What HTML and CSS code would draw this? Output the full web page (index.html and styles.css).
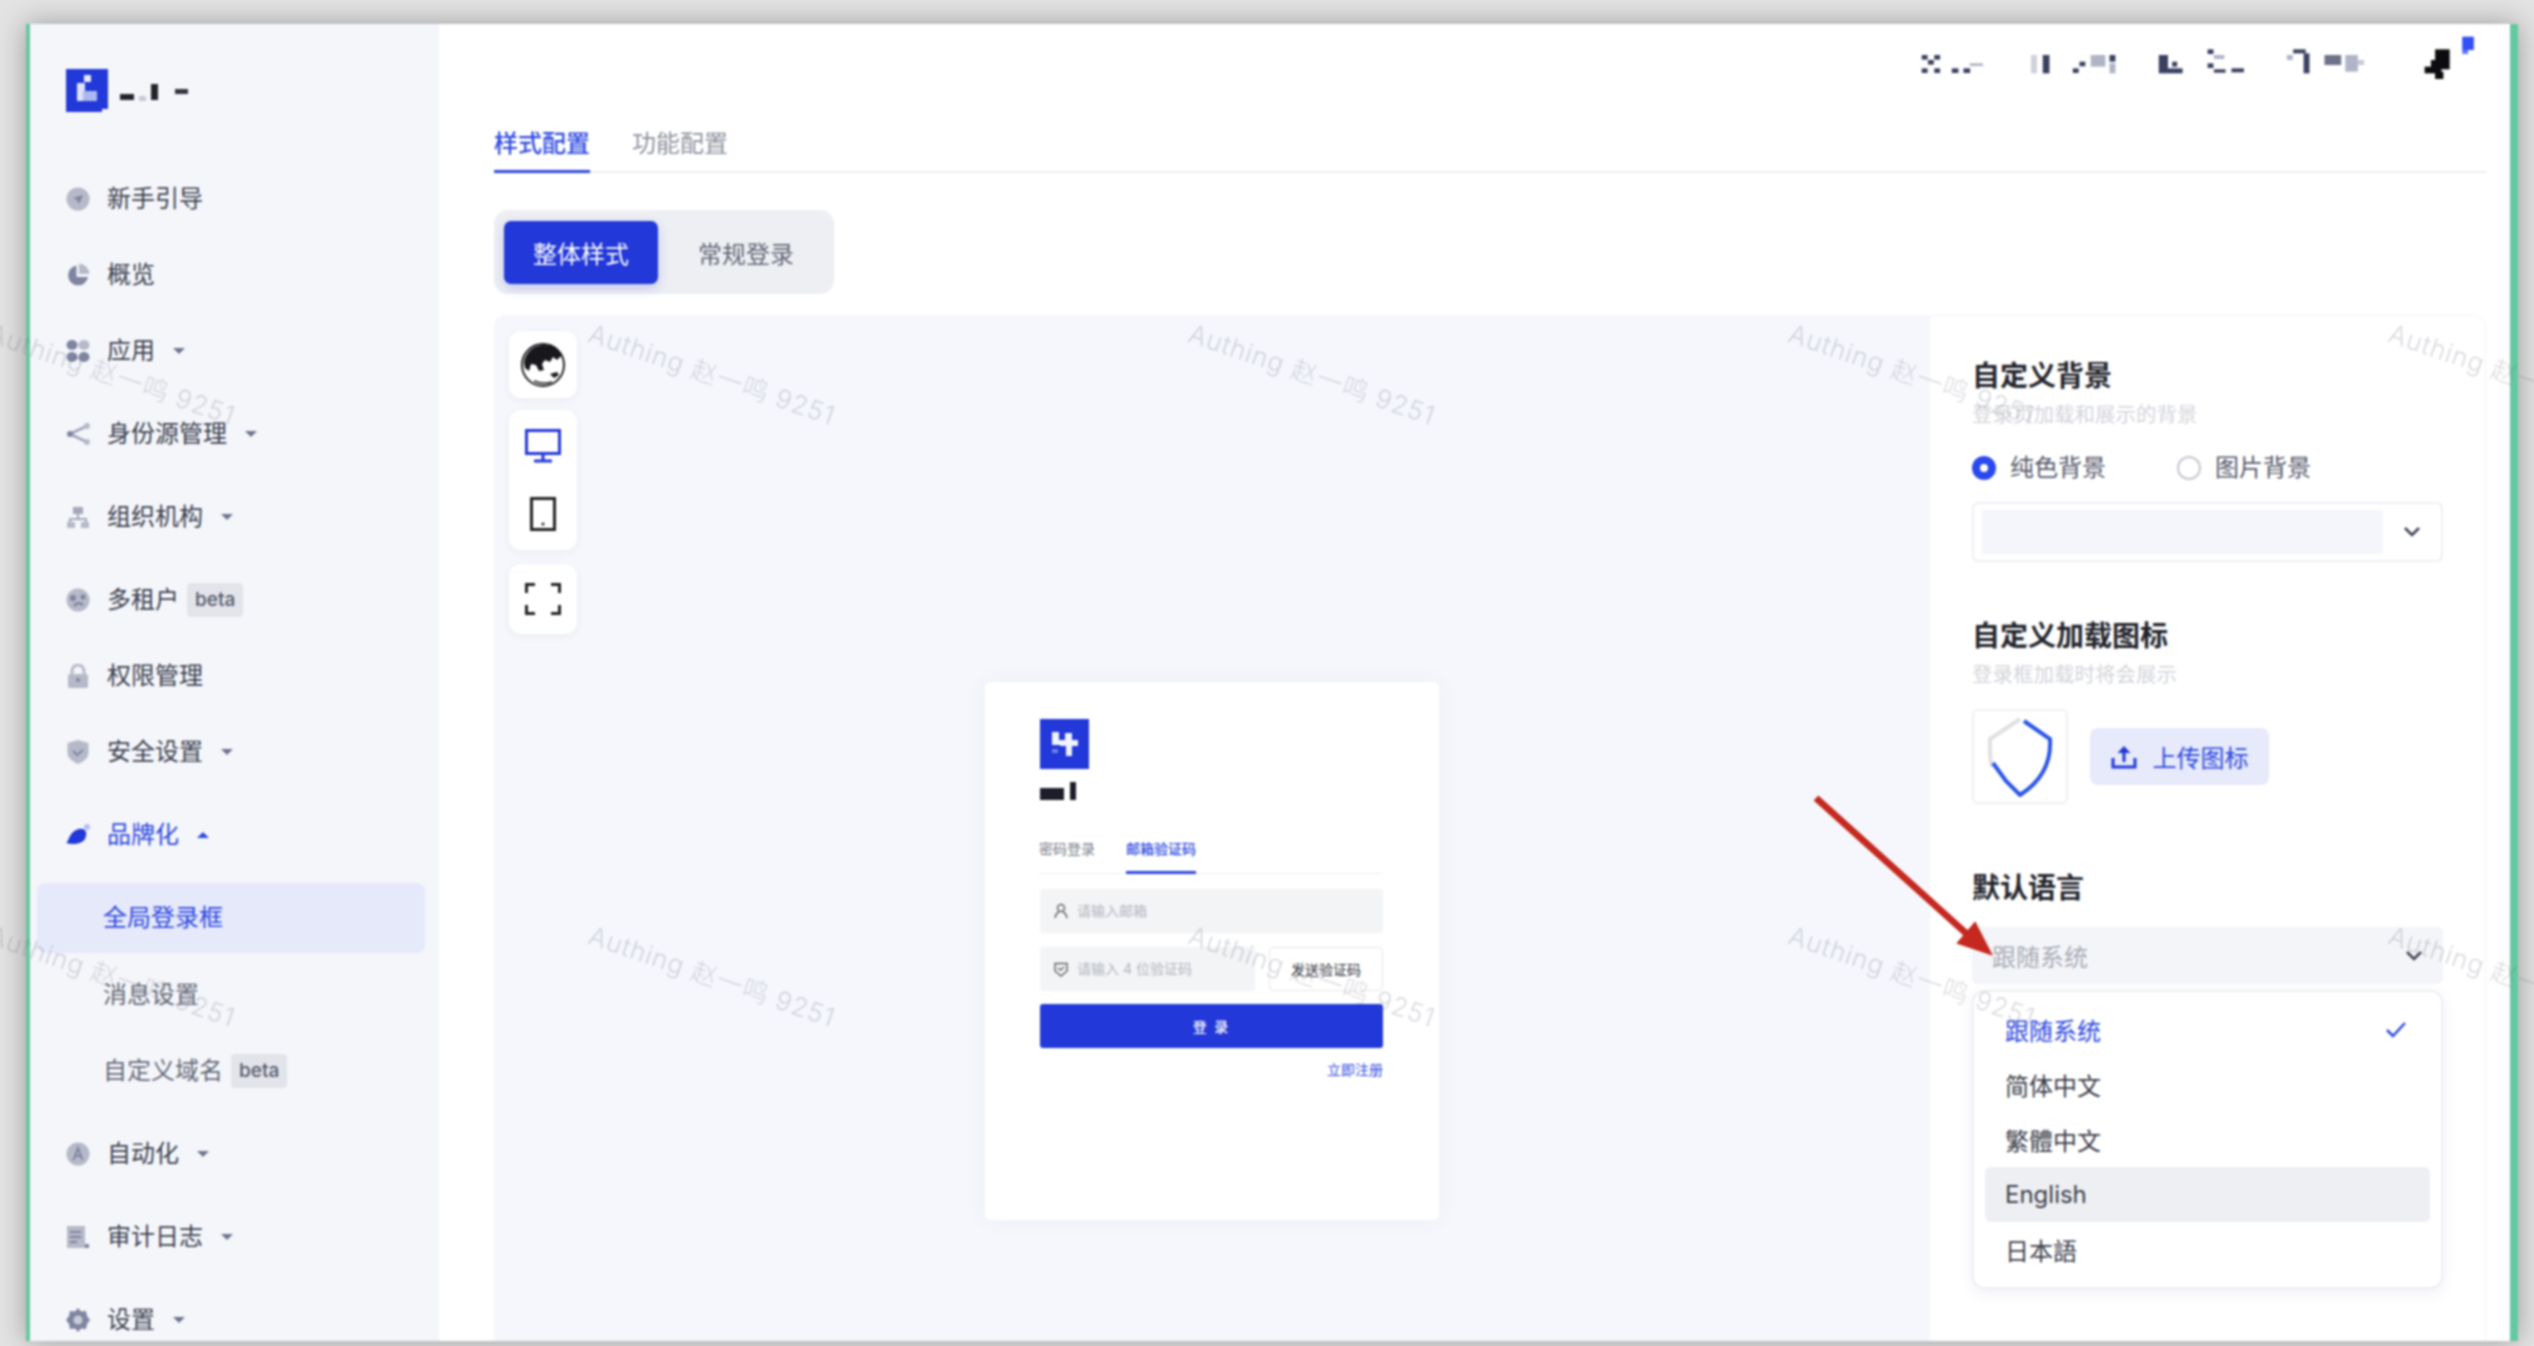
FILE: index.html
```html
<!DOCTYPE html>
<html lang="zh-CN">

<head>
    <meta charset="UTF-8">
    <title>全局登录框</title>
    <link rel="stylesheet" href="styles.css">
</head>

<body>
    <div class="Fenster">
        <aside class="Sidebar">
            <div class="Logo">
                <svg width="42" height="43" viewBox="0 0 42 43">
                    <rect width="42" height="40" fill="#2238d8" />
                    <rect y="38" width="36" height="5" fill="#2238d8" />
                    <rect x="18" y="6" width="7" height="7" fill="#e8ebfb" />
                    <rect x="11" y="14" width="8" height="18" fill="#dfe3fa" />
                    <rect x="17" y="22" width="14" height="10" fill="#aeb8f0" />
                </svg>
                <svg class="LogoText" width="72" height="20" viewBox="0 0 72 20">
                    <rect x="0" y="11" width="14" height="6" fill="#22232c" />
                    <rect x="19" y="13" width="7" height="5" fill="#c9cad0" />
                    <rect x="31" y="1" width="7" height="16" fill="#22232c" />
                    <rect x="55" y="6" width="13" height="5" fill="#33343c" />
                </svg>
            </div>
            <nav class="Menu">
                <a class="MenuItem">
                    <svg class="MenuIcon" viewBox="0 0 24 24"><circle cx="12" cy="12" r="11.5" fill="#b6b9c8" /><path d="M7 11l10-3-4 9-2-4z" fill="#7f84a0" /></svg>
                    <span>新手引导</span>
                </a>
                <a class="MenuItem">
                    <svg class="MenuIcon" viewBox="0 0 24 24"><path d="M10.500 2.500a10 10 0 1 0 11.500 11.500h-11.500z" fill="#7f84a0" /><path d="M13 0.500a11 11 0 0 1 10.500 10.500h-10.500z" fill="#b6b9c8" /></svg>
                    <span>概览</span>
                </a>
                <a class="MenuItem">
                    <svg class="MenuIcon" viewBox="0 0 24 24"><ellipse cx="6" cy="6" rx="5.500" ry="5" fill="#7f84a0" /><ellipse cx="18" cy="6" rx="5.500" ry="5" fill="#b6b9c8" /><ellipse cx="6" cy="18" rx="5.500" ry="5" fill="#7f84a0" /><ellipse cx="18" cy="18" rx="5.500" ry="5" fill="#7f84a0" /></svg>
                    <span>应用</span><i class="Caret"></i>
                </a>
                <a class="MenuItem Abstand">
                    <svg class="MenuIcon" viewBox="0 0 24 24"><path d="M21 4L4 12l17 8" fill="none" stroke="#a3a7ba" stroke-width="3" /><circle cx="21" cy="4" r="3" fill="#b6b9c8" /><circle cx="21" cy="20" r="3" fill="#b6b9c8" /><circle cx="4" cy="12" r="3" fill="#7f84a0" /></svg>
                    <span>身份源管理</span><i class="Caret"></i>
                </a>
                <a class="MenuItem Abstand">
                    <svg class="MenuIcon" viewBox="0 0 24 24"><rect x="7" y="2" width="10" height="7" fill="#a3a7ba" /><path d="M12 9v5M4 17v-3h16v3" fill="none" stroke="#a3a7ba" stroke-width="2" /><rect x="1" y="17" width="8" height="6" fill="#b6b9c8" /><rect x="15" y="17" width="8" height="6" fill="#b6b9c8" /></svg>
                    <span>组织机构</span><i class="Caret"></i>
                </a>
                <a class="MenuItem Abstand">
                    <svg class="MenuIcon" viewBox="0 0 24 24"><circle cx="12" cy="12" r="11.500" fill="#b6b9c8" /><circle cx="7" cy="10" r="3" fill="#7f84a0" /><circle cx="17" cy="9" r="2.500" fill="#7f84a0" /><path d="M8 18q4-5 9-1" fill="none" stroke="#7f84a0" stroke-width="2.500" /></svg>
                    <span>多租户</span><em class="Beta">beta</em>
                </a>
                <a class="MenuItem">
                    <svg class="MenuIcon" viewBox="0 0 24 24"><path d="M6 10V7a6 6 0 0 1 12 0v3" fill="none" stroke="#b6b9c8" stroke-width="3" /><rect x="2" y="10" width="20" height="14" rx="2" fill="#b6b9c8" /><circle cx="12" cy="16" r="2" fill="#7f84a0" /></svg>
                    <span>权限管理</span>
                </a>
                <a class="MenuItem">
                    <svg class="MenuIcon" viewBox="0 0 24 24"><path d="M12 0l10.500 3v10c0 5-5 8.500-10.500 11C6.500 21.500 1.500 18 1.500 13V3z" fill="#b6b9c8" /><path d="M7 11l4 4 6-5" fill="none" stroke="#7f84a0" stroke-width="2" /></svg>
                    <span>安全设置</span><i class="Caret"></i>
                </a>
                <a class="MenuItem Abstand Blau">
                    <svg class="MenuIcon" viewBox="0 0 24 24"><path d="M0 20c3-1 3-12 13-14 7-1 9 4 6 10-3 5-12 6-19 4z" fill="#2238d8" /><circle cx="21" cy="4" r="3" fill="#b6bdf0" /></svg>
                    <span>品牌化</span><i class="Caret Hoch"></i>
                </a>
                <a class="SubItem Aktiv">全局登录框</a>
                <a class="SubItem">消息设置</a>
                <a class="SubItem">自定义域名<em class="Beta">beta</em></a>
                <a class="MenuItem Abstand">
                    <svg class="MenuIcon" viewBox="0 0 24 24"><circle cx="12" cy="12" r="11.500" fill="#b6b9c8" /><path d="M7.500 18L12 6l4.500 12M9 14h6" fill="none" stroke="#7f84a0" stroke-width="2" /></svg>
                    <span>自动化</span><i class="Caret"></i>
                </a>
                <a class="MenuItem Abstand">
                    <svg class="MenuIcon" viewBox="0 0 24 24"><rect x="1" y="1" width="18" height="22" fill="#b6b9c8" /><path d="M4 7h11M4 12h11M4 17h7" stroke="#7f84a0" stroke-width="2" /><rect x="19" y="19" width="4" height="4" fill="#7f84a0" /></svg>
                    <span>审计日志</span><i class="Caret"></i>
                </a>
                <a class="MenuItem Abstand">
                    <svg class="MenuIcon" viewBox="0 0 24 24"><path d="M12 0l3 3.500 5-.5 1 5 3 4-3 4-1 5-5-.5-3 3.500-3-3.500-5 .5-1-5-3-4 3-4 1-5 5 .5z" fill="#7f84a0" /><circle cx="12" cy="12" r="4.500" fill="#c8cbd8" /></svg>
                    <span>设置</span><i class="Caret"></i>
                </a>
            </nav>
        </aside>

        <main class="Haupt">
            <header class="Kopf">
                <svg width="606" height="60" viewBox="0 108 1452 180" preserveAspectRatio="none">
                    <g fill="#3a4060">
                        <rect x="100" y="165" width="14" height="14" /><rect x="130" y="165" width="14" height="14" /><rect x="115" y="180" width="14" height="14" /><rect x="100" y="205" width="14" height="14" /><rect x="130" y="205" width="14" height="14" />
                        <rect x="172" y="205" width="16" height="14" /><rect x="200" y="205" width="16" height="14" />
                        <rect x="390" y="165" width="16" height="55" />
                        <rect x="462" y="205" width="14" height="14" /><rect x="478" y="185" width="14" height="14" /><rect x="550" y="165" width="14" height="20" />
                        <rect x="668" y="165" width="22" height="55" /><rect x="690" y="205" width="35" height="15" /><rect x="700" y="185" width="12" height="15" />
                        <rect x="785" y="148" width="14" height="14" /><rect x="785" y="190" width="14" height="14" /><rect x="800" y="208" width="28" height="10" /><rect x="842" y="205" width="30" height="12" />
                        <rect x="990" y="148" width="30" height="12" /><rect x="1015" y="160" width="14" height="60" />
                    </g>
                    <g fill="#b0b4c6">
                        <rect x="215" y="190" width="32" height="8" /><rect x="362" y="165" width="14" height="55" fill="#cfd1dc" /><rect x="505" y="165" width="35" height="35" /><rect x="550" y="190" width="14" height="30" />
                        <rect x="800" y="165" width="25" height="12" /><rect x="975" y="165" width="14" height="15" />
                        <rect x="1065" y="165" width="40" height="30" fill="#6d7288" /><rect x="1115" y="165" width="30" height="50" /><rect x="1145" y="180" width="15" height="15" fill="#c8cad6" />
                    </g>
                    <g fill="#0c0c10">
                        <rect x="1330" y="148" width="35" height="60" /><rect x="1320" y="180" width="20" height="30" /><rect x="1305" y="200" width="40" height="20" /><rect x="1330" y="215" width="20" height="22" />
                    </g>
                    <rect x="1395" y="110" width="28" height="40" fill="#3350f5" /><rect x="1395" y="150" width="14" height="12" fill="#6078f5" />
                </svg>
            </header>

            <div class="Tabs">
                <a class="Tab TabAktiv">样式配置</a>
                <a class="Tab">功能配置</a>
            </div>

            <div class="Segment">
                <button class="SegBtn SegAktiv">整体样式</button>
                <button class="SegBtn SegZwei">常规登录</button>
            </div>

            <section class="Arbeit">
                <div class="Leinwand">
                    <div class="Werkzeuge">
                        <div class="Gruppe GruppeEins">
                            <svg width="44" height="44" viewBox="0 0 44 44">
                                <circle cx="22" cy="22" r="21" fill="#fff" stroke="#222" stroke-width="2" />
                                <path d="M3 20C4 10 12 2 23 2c8 0 14 3 18 10l-5 5-4-3-3 5-5-2-3 4 2 6-5 1-3-6-5-1-2 7-4-3z" fill="#17171c" />
                                <path d="M29 31l7-2 2 3-5 3z" fill="#17171c" />
                                <path d="M13 38q9 4 18 1" fill="none" stroke="#444" stroke-width="2" />
                            </svg>
                        </div>
                        <div class="Gruppe GruppeZwei">
                            <svg width="36" height="34" viewBox="0 0 36 34" fill="none" stroke="#2238d8" stroke-width="3">
                                <rect x="1.500" y="1.500" width="33" height="23" />
                                <path d="M18 25v6M9 32h18" />
                            </svg>
                            <svg width="26" height="34" viewBox="0 0 26 34">
                                <rect x="1.500" y="1.500" width="23" height="31" fill="none" stroke="#222" stroke-width="3" />
                                <circle cx="13" cy="27" r="1.500" fill="#222" />
                            </svg>
                        </div>
                        <div class="Gruppe GruppeDrei">
                            <svg width="36" height="32" viewBox="0 0 36 32" fill="none" stroke="#222" stroke-width="3">
                                <path d="M10 1.500H1.500V10M26 1.500h8.500V10M10 30.500H1.500V22M26 30.500h8.500V22" />
                            </svg>
                        </div>
                    </div>

                    <div class="Karte">
                        <svg class="KarteLogo" width="49" height="50" viewBox="0 0 49 50">
                            <rect width="49" height="50" fill="#2238d8" />
                            <path d="M12 13h7v8h6v-7h7v7h6v6h-6v10h-6V27h-6v-1h-8z" fill="#f1f3fe" />
                            <rect x="12" y="30" width="6" height="4" fill="#6f80e6" />
                        </svg>
                        <svg class="KarteName" width="37" height="20" viewBox="0 0 37 20">
                            <rect x="0" y="6" width="24" height="12" fill="#1c1d28" />
                            <rect x="30" y="0" width="6" height="18" fill="#1c1d28" />
                        </svg>
                        <div class="KarteTabs">
                            <a class="KarteTab">密码登录</a>
                            <a class="KarteTab KarteTabAktiv">邮箱验证码</a>
                        </div>
                        <div class="Feld">
                            <svg width="14" height="16" viewBox="0 0 14 16" fill="none" stroke="#666" stroke-width="1.500">
                                <circle cx="7" cy="5" r="3.500" />
                                <path d="M1 15q1-5 4-6M13 15q-1-5-4-6" />
                            </svg>
                            <span>请输入邮箱</span>
                        </div>
                        <div class="Zeile">
                            <div class="Feld FeldKurz">
                                <svg width="14" height="16" viewBox="0 0 14 16" fill="none" stroke="#666" stroke-width="1.500">
                                    <path d="M1 2.500h12V10l-6 5-6-5z" />
                                    <path d="M4 7l2.500 2L10 6" />
                                </svg>
                                <span>请输入 4 位验证码</span>
                            </div>
                            <button class="Senden">发送验证码</button>
                        </div>
                        <button class="Einloggen">登 录</button>
                        <a class="Registrieren">立即注册</a>
                    </div>
                </div>

                <div class="Panel">
                    <h3>自定义背景</h3>
                    <p class="Hinweis">登录页加载和展示的背景</p>
                    <div class="Radios">
                        <label class="Radio"><i class="Punkt PunktAn"></i>纯色背景</label>
                        <label class="Radio"><i class="Punkt"></i>图片背景</label>
                    </div>
                    <div class="Farbwahl">
                        <div class="Farbe"></div>
                        <svg class="Pfeil" width="18" height="12" viewBox="0 0 18 12"><path d="M2 2l7 7 7-7" fill="none" stroke="#3d4254" stroke-width="2.500" /></svg>
                    </div>

                    <h3 class="Block">自定义加载图标</h3>
                    <p class="Hinweis">登录框加载时将会展示</p>
                    <div class="Upload">
                        <div class="IconBox">
                            <svg width="66" height="80" viewBox="0 0 66 80" fill="none" stroke-width="4">
                                <path d="M5 50C2 40 3 30 3 22L33 2" stroke="#e0e0e2" />
                                <path d="M37 4l26 18c1 16-2 38-30 56L19 64 6 46" stroke="#2a55e8" />
                            </svg>
                        </div>
                        <button class="UploadBtn">
                            <svg width="26" height="26" viewBox="0 0 26 26" fill="none" stroke="#2238d8" stroke-width="3">
                                <path d="M2 14v9h22v-9" />
                                <path d="M13 18V5" />
                                <path d="M6.500 9L13 2l6.500 7z" fill="#2238d8" stroke="none" />
                            </svg>
                            上传图标
                        </button>
                    </div>

                    <h3 class="BlockDrei">默认语言</h3>
                    <div class="Sprachwahl">
                        <span>跟随系统</span>
                        <svg width="18" height="12" viewBox="0 0 18 12"><path d="M2 2l7 7 7-7" fill="none" stroke="#3d4254" stroke-width="2.500" /></svg>
                    </div>
                    <ul class="Liste">
                        <li class="Option OptionAktiv">跟随系统
                            <svg width="22" height="18" viewBox="0 0 22 18"><path d="M2 9l6 6L20 2" fill="none" stroke="#2d48e0" stroke-width="2.500" /></svg>
                        </li>
                        <li class="Option">简体中文</li>
                        <li class="Option">繁體中文</li>
                        <li class="Option OptionHover">English</li>
                        <li class="Option">日本語</li>
                    </ul>
                </div>
            </section>
        </main>

        <div class="Wasserzeichen">
            <span>Authing 赵一鸣 9251</span><span>Authing 赵一鸣 9251</span><span>Authing 赵一鸣 9251</span><span>Authing 赵一鸣 9251</span><span>Authing 赵一鸣 9251</span>
            <span>Authing 赵一鸣 9251</span><span>Authing 赵一鸣 9251</span><span>Authing 赵一鸣 9251</span><span>Authing 赵一鸣 9251</span><span>Authing 赵一鸣 9251</span>
        </div>

        <svg class="Hinweispfeil" width="200" height="170" viewBox="0 0 200 170">
            <path d="M16 8L168 145" stroke="#c5281f" stroke-width="7" />
            <path d="M191 164L158 153 175 133z" fill="#c5281f" stroke="#c5281f" stroke-width="2" />
        </svg>
    </div>
</body>

</html>
```
FILE: styles.css
```css
html,
body {
    height: 100%;
}

body {
    margin: 0;
    overflow: hidden;
    background: #e3e3e3;
    font-family: Inter, "Noto Sans CJK SC", sans-serif;
    color: #2a2d38;
}

.Fenster {
    position: absolute;
    left: 26px;
    top: 24px;
    right: 16px;
    bottom: 5px;
    display: flex;
    background: #ffffff;
    border-left: 4px solid #64c8a0;
    border-right: 8px solid #64c8a0;
    box-shadow: 0 0 26px rgba(0, 0, 0, 0.32);
    filter: blur(0.9px);
}

/* Sidebar */
.Sidebar {
    width: 409px;
    flex-shrink: 0;
    background: #f5f6fa;
}

.Logo {
    display: flex;
    align-items: center;
    gap: 12px;
    padding: 45px 0 0 36px;
    height: 43px;
}

.LogoText {
    margin-top: 4px;
}

.Menu {
    margin-top: 49px;
    font-size: 24px;
    line-height: 36px;
    color: #3a3f4e;
}

.MenuItem {
    display: flex;
    align-items: center;
    height: 76px;
    padding-left: 36px;
}

.MenuIcon {
    width: 24px;
    height: 24px;
    margin-right: 17px;
    flex-shrink: 0;
}

.Abstand {
    margin-top: 7px;
}

.Blau {
    color: #2d48e0;
}

.Caret {
    width: 0;
    height: 0;
    margin-left: 18px;
    border-left: 6px solid transparent;
    border-right: 6px solid transparent;
    border-top: 6px solid #6d7390;
}

.Hoch {
    border-top: 0;
    border-bottom: 6px solid #2d48e0;
}

.Beta {
    margin-left: 8px;
    padding: 0 8px;
    height: 34px;
    line-height: 34px;
    border-radius: 4px;
    background: #e3e4ea;
    color: #555a6c;
    font-size: 19px;
    font-style: normal;
    font-weight: 500;
}

.SubItem {
    display: flex;
    align-items: center;
    height: 76px;
    padding-left: 73px;
    color: #646978;
}

.Aktiv {
    height: 70px;
    margin: 10px 14px 4px 7px;
    padding-left: 66px;
    border-radius: 8px;
    background: #e5e9fa;
    color: #2d48e0;
}

/* Hauptbereich */
.Haupt {
    flex: 1;
    min-width: 0;
    display: flex;
    flex-direction: column;
    padding: 0 24px 0 55px;
}

.Kopf {
    display: flex;
    justify-content: flex-end;
    padding-top: 12px;
}

.Tabs {
    display: flex;
    gap: 42px;
    margin-top: 28px;
    border-bottom: 2px solid #eceef2;
    font-size: 24px;
    line-height: 40px;
    color: #8b8f9c;
}

.Tab {
    padding-bottom: 6px;
    margin-bottom: -2px;
    border-bottom: 3px solid transparent;
}

.TabAktiv {
    color: #2d48e0;
    font-weight: 500;
    border-bottom-color: #2d48e0;
}

.Segment {
    display: flex;
    align-self: flex-start;
    margin-top: 37px;
    padding: 11px 0 10px 10px;
    border-radius: 14px;
    background: #eeeff3;
}

.SegBtn {
    height: 63px;
    width: 154px;
    border: 0;
    border-radius: 7px;
    background: transparent;
    font-family: inherit;
    font-size: 24px;
    color: #5f6472;
}

.SegZwei {
    width: 176px;
}

.SegAktiv {
    background: #2238d8;
    color: #ffffff;
    box-shadow: 0 4px 12px rgba(34, 56, 216, 0.22);
}

.Arbeit {
    flex: 1;
    min-height: 0;
    display: flex;
    margin-top: 21px;
    border-radius: 12px 12px 0 0;
    overflow: hidden;
}

.Leinwand {
    position: relative;
    flex: 1;
    display: flex;
    justify-content: center;
    align-items: flex-start;
    padding-top: 367px;
    background: #f5f7fc;
}

.Werkzeuge {
    position: absolute;
    left: 15px;
    top: 16px;
    display: flex;
    flex-direction: column;
    gap: 12px;
}

.Gruppe {
    display: flex;
    flex-direction: column;
    align-items: center;
    justify-content: center;
    width: 68px;
    border-radius: 12px;
    background: #ffffff;
    box-shadow: 0 2px 8px rgba(40, 50, 90, 0.06);
}

.GruppeEins {
    height: 67px;
}

.GruppeZwei {
    height: 140px;
    gap: 34px;
}

.GruppeDrei {
    height: 70px;
    margin-top: 2px;
}

/* Login-Karte */
.Karte {
    display: flex;
    flex-direction: column;
    box-sizing: border-box;
    width: 454px;
    height: 538px;
    padding: 37px 56px 0 55px;
    border-radius: 6px;
    background: #ffffff;
    box-shadow: 0 0 24px rgba(60, 70, 120, 0.05);
    font-size: 14px;
    line-height: 20px;
}

.KarteName {
    margin-top: 13px;
}

.KarteTabs {
    display: flex;
    gap: 31px;
    margin: 37px 0 15px -1px;
    border-bottom: 1px solid #f0f1f3;
    color: #777b86;
}

.KarteTab {
    padding-bottom: 12px;
    margin-bottom: -1px;
    border-bottom: 3px solid transparent;
}

.KarteTabAktiv {
    color: #2d48e0;
    font-weight: 500;
    border-bottom-color: #2d48e0;
}

.Feld {
    display: flex;
    align-items: center;
    gap: 9px;
    height: 44px;
    padding-left: 14px;
    border-radius: 3px;
    background: #f3f4f6;
    color: #b4b7be;
}

.Zeile {
    display: flex;
    gap: 14px;
    margin-top: 14px;
}

.FeldKurz {
    flex: 1;
}

.Senden {
    width: 114px;
    border: 1px solid #e6e7ea;
    border-radius: 4px;
    background: #ffffff;
    font-family: inherit;
    font-size: 14px;
    color: #33353d;
}

.Einloggen {
    height: 44px;
    margin-top: 13px;
    border: 0;
    border-radius: 3px;
    background: #2238d8;
    color: #ffffff;
    font-family: inherit;
    font-size: 14px;
    font-weight: 500;
    letter-spacing: 2px;
}

.Registrieren {
    align-self: flex-end;
    margin-top: 12px;
    color: #2d48e0;
}

/* rechtes Panel */
.Panel {
    box-sizing: border-box;
    width: 556px;
    flex-shrink: 0;
    padding: 40px 42px 0 42px;
    background: #ffffff;
    border: 1px solid #f3f4f7;
    border-bottom: 0;
    border-left: 0;
    border-radius: 0 12px 0 0;
}

.Panel h3 {
    margin: 0;
    font-size: 28px;
    line-height: 40px;
    font-weight: 600;
    color: #22242c;
}

.Hinweis {
    margin: 4px 0 0;
    font-size: 20.500px;
    line-height: 30px;
    color: #d3d5da;
}

.Radios {
    display: flex;
    gap: 71px;
    margin-top: 23px;
    font-size: 24px;
    line-height: 30px;
    color: #55596a;
}

.Radio {
    display: flex;
    align-items: center;
    gap: 14px;
}

.Punkt {
    box-sizing: border-box;
    width: 24px;
    height: 24px;
    border: 2px solid #c4c7cf;
    border-radius: 50%;
}

.PunktAn {
    border: 8px solid #2a48ee;
}

.Farbwahl {
    display: flex;
    align-items: center;
    box-sizing: border-box;
    height: 60px;
    margin-top: 19px;
    padding: 7px 20px 7px 8px;
    border: 2px solid #eeeff2;
    border-radius: 6px;
}

.Farbe {
    flex: 1;
    height: 44px;
    margin-right: 20px;
    background: #f5f6fb;
}

.Panel .Block {
    margin-top: 54px;
}

.Upload {
    display: flex;
    align-items: center;
    gap: 22px;
    margin-top: 19px;
}

.IconBox {
    display: flex;
    align-items: center;
    justify-content: center;
    box-sizing: border-box;
    width: 96px;
    height: 95px;
    border: 2px solid #eff0f3;
    border-radius: 6px;
}

.UploadBtn {
    display: flex;
    align-items: center;
    justify-content: center;
    gap: 16px;
    width: 179px;
    height: 57px;
    border: 0;
    border-radius: 8px;
    background: #e6eafa;
    color: #2d48e0;
    font-family: inherit;
    font-size: 24px;
}

.Panel .BlockDrei {
    margin-top: 64px;
}

.Sprachwahl {
    display: flex;
    align-items: center;
    justify-content: space-between;
    height: 57px;
    margin-top: 19px;
    padding: 0 20px;
    border-radius: 6px;
    background: #f4f5f8;
    font-size: 24px;
    color: #a9acb5;
}

.Liste {
    box-sizing: border-box;
    height: 299px;
    margin: 6px 0 0;
    padding: 10px 11px 0;
    list-style: none;
    border: 2px solid #eeeff3;
    border-radius: 12px;
    background: #ffffff;
    box-shadow: 0 4px 14px rgba(50, 60, 100, 0.08);
    font-size: 24px;
    color: #3a3d48;
}

.Option {
    display: flex;
    align-items: center;
    justify-content: space-between;
    height: 55px;
    padding: 0 23px 0 20px;
    border-radius: 6px;
}

.OptionAktiv {
    color: #2d48e0;
}

.OptionHover {
    background: #eeeff3;
}

/* liegt ueber allem */
.Wasserzeichen {
    position: absolute;
    left: -217px;
    top: 47px;
    display: grid;
    grid-template-columns: repeat(5, 600px);
    grid-auto-rows: 602px;
    pointer-events: none;
}

.Wasserzeichen span {
    display: flex;
    align-items: center;
    justify-content: center;
    transform: rotate(19deg);
    white-space: nowrap;
    font-size: 26px;
    font-weight: 300;
    letter-spacing: 1px;
    color: rgba(90, 95, 115, 0.24);
}

.Hinweispfeil {
    position: absolute;
    left: 1770px;
    top: 766px;
}
```
